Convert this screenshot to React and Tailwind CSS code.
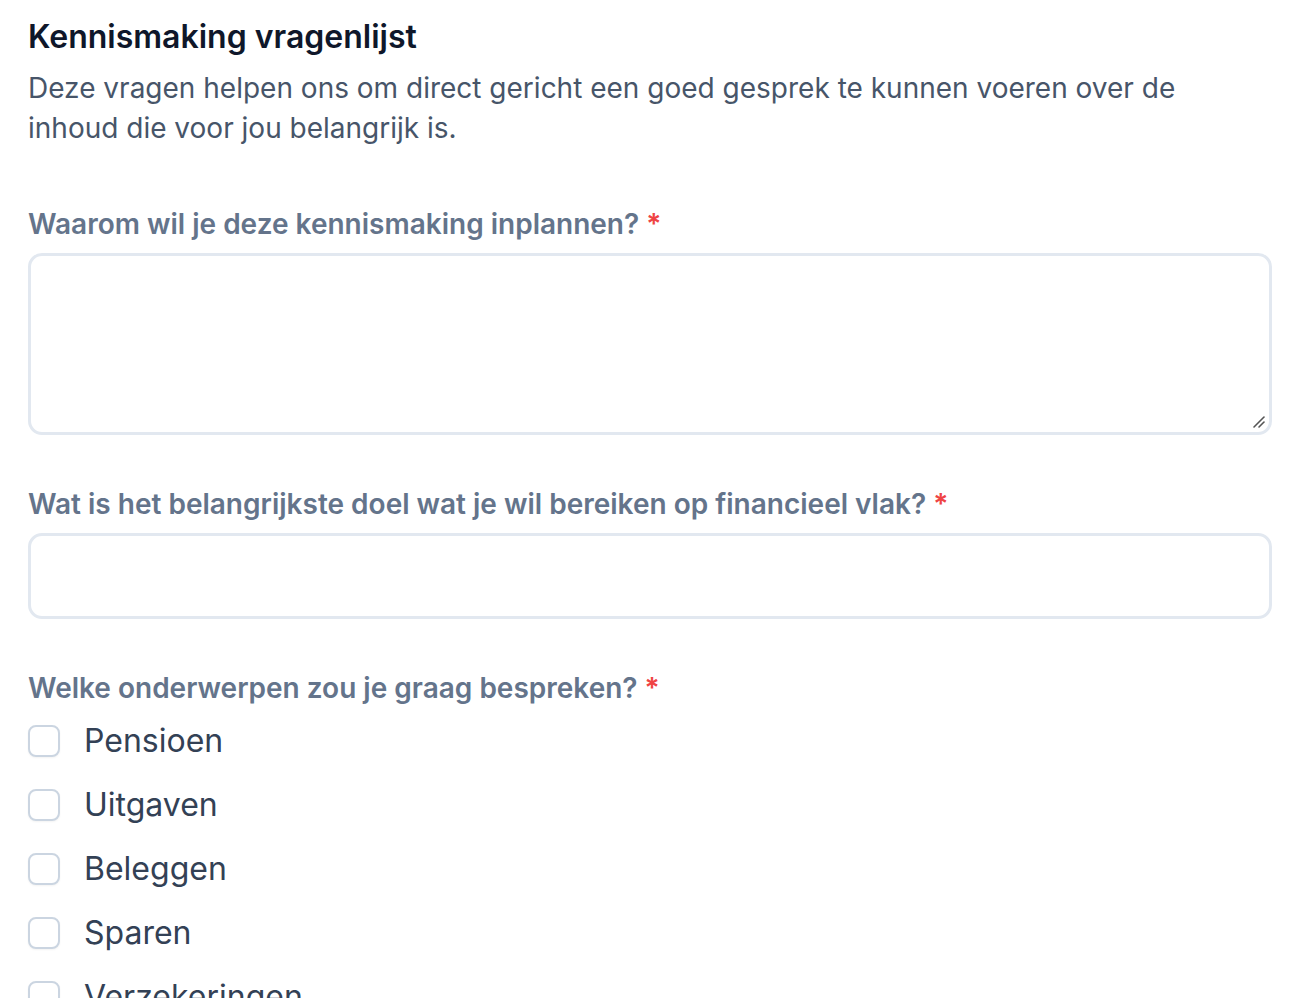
import React from "react";

const font = { fontFamily: "Inter, 'Noto Sans', sans-serif" };

function Label({ children }) {
  return (
    <label className="block text-[28px] leading-[40px] font-semibold text-[#64748b]">
      {children} <span className="text-[#ef4444]">*</span>
    </label>
  );
}

export default function App() {
  const items = ["Pensioen", "Uitgaven", "Beleggen", "Sparen", "Verzekeringen"];
  return (
    <div className="bg-white min-h-screen px-[28px] pt-[13px] h-[998px] overflow-hidden" style={font}>
      <h2 className="text-[32px] leading-[48px] font-semibold text-[#0f172a]">Kennismaking vragenlijst</h2>
      <p className="mt-[7px] text-[28px] leading-[40px] text-[#475569]">
        Deze vragen helpen ons om direct gericht een goed gesprek te kunnen voeren over de
        <br />
        inhoud die voor jou belangrijk is.
      </p>

      <div className="mt-[56px]">
        <Label>Waarom wil je deze kennismaking inplannen?</Label>
        <div className="relative mt-[9px]">
          <textarea className="block w-full h-[182px] rounded-[14px] border-[3px] border-[#e2e8f0] bg-white outline-none resize-none" />
          <svg className="absolute right-[5px] bottom-[5px]" width="16" height="16" viewBox="0 0 16 16">
            <line x1="3" y1="13" x2="13" y2="3" stroke="#555" strokeWidth="1.6" strokeLinecap="round" />
            <line x1="8" y1="13" x2="13" y2="8" stroke="#555" strokeWidth="1.6" strokeLinecap="round" />
          </svg>
        </div>
      </div>

      <div className="mt-[49px]">
        <Label>Wat is het belangrijkste doel wat je wil bereiken op financieel vlak?</Label>
        <input className="mt-[9px] block w-full h-[86px] rounded-[14px] border-[3px] border-[#e2e8f0] bg-white outline-none" />
      </div>

      <div className="mt-[49px]">
        <Label>Welke onderwerpen zou je graag bespreken?</Label>
        <div className="mt-[1px] flex flex-col">
          {items.map((it) => (
            <div key={it} className="flex items-center h-[64px] gap-[24px]">
              <span className="w-[32px] h-[32px] rounded-[8px] border-2 border-[#cbd5e1] bg-white shadow-[0_1px_2px_rgba(0,0,0,0.05)] shrink-0" />
              <span className="text-[32px] leading-[48px] text-[#334155]">{it}</span>
            </div>
          ))}
        </div>
      </div>
    </div>
  );
}
